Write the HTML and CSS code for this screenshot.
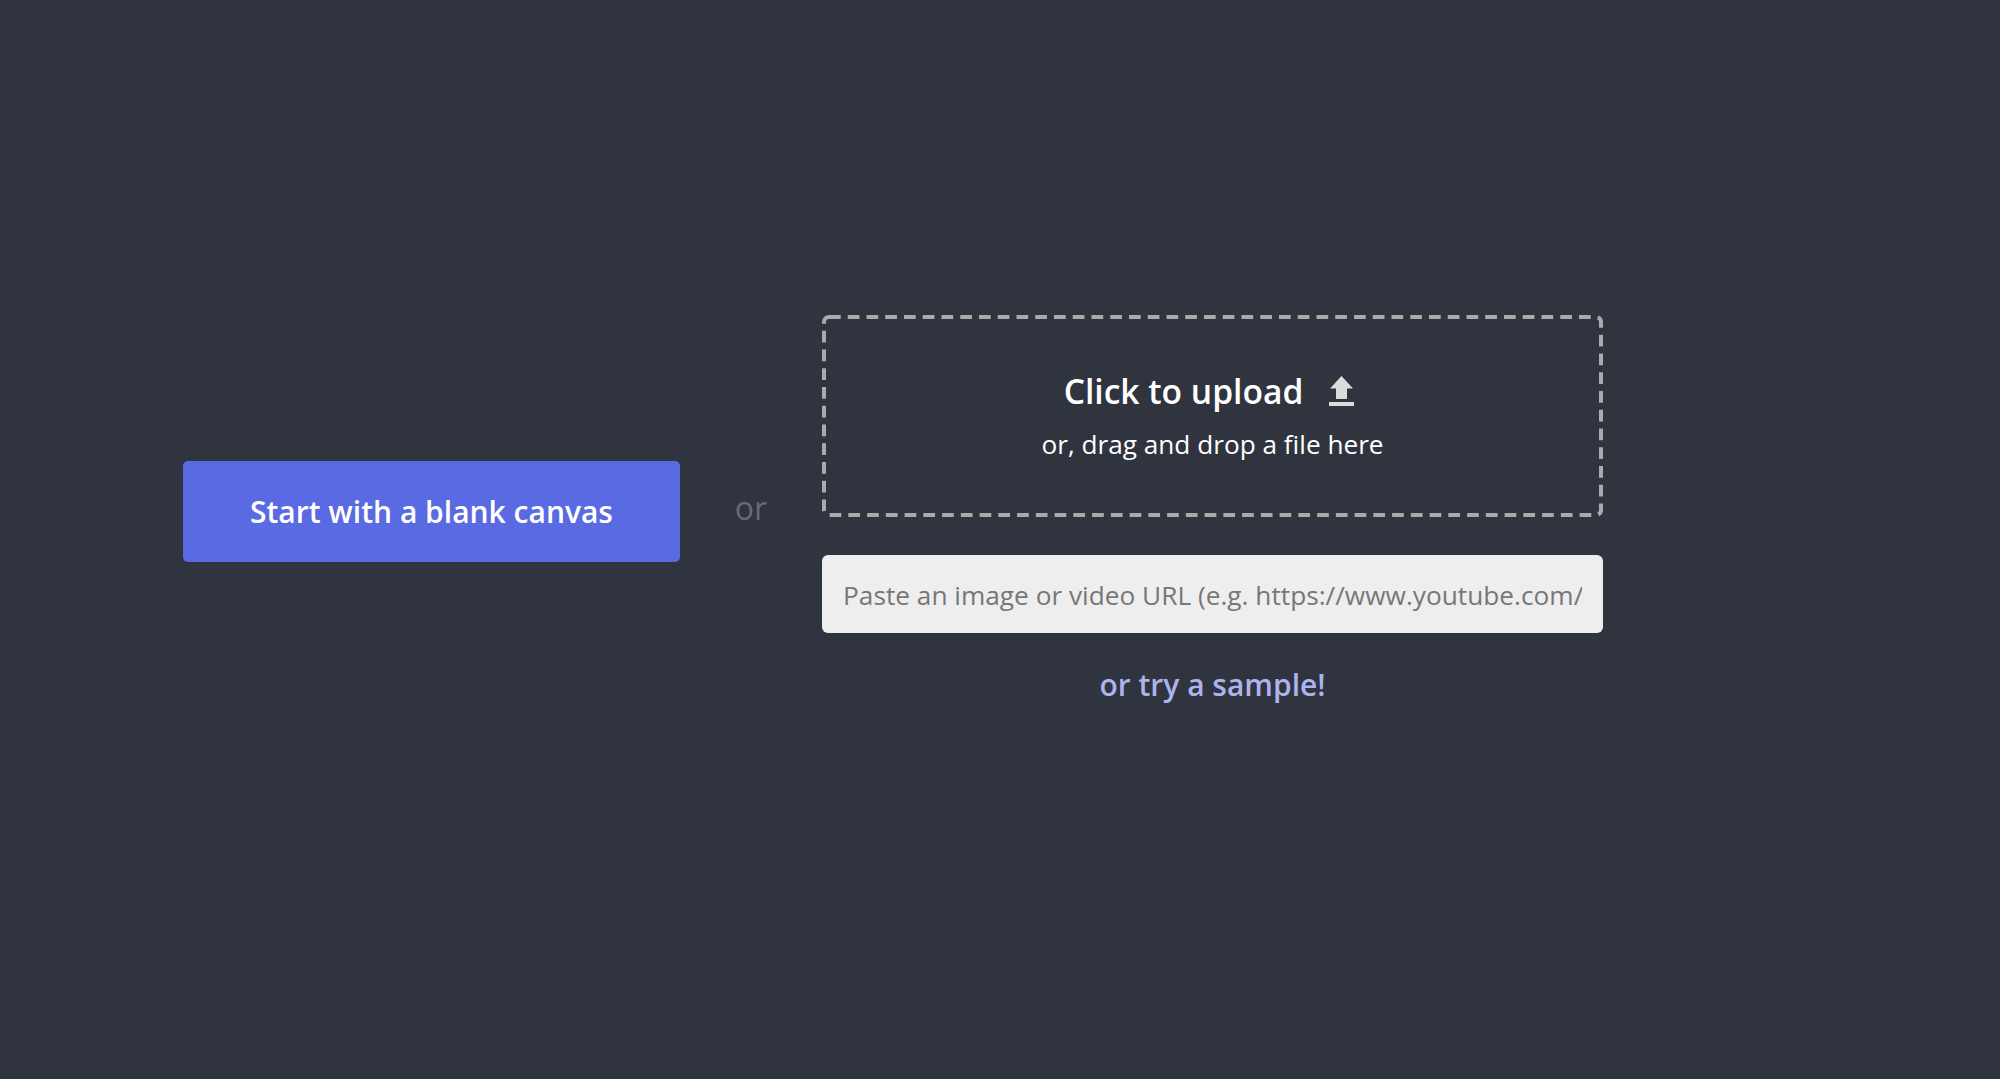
FILE: index.html
```html
<!DOCTYPE html>
<html lang="en">
<head>
    <meta charset="UTF-8">
    <title>New canvas</title>
    <link rel="stylesheet" href="styles.css">
</head>
<body>
    <main class="start-row">
        <button class="blank-btn" type="button">Start with a blank canvas</button>
        <span class="or-text">or</span>
        <div class="source-col">
            <div class="dropzone">
                <svg class="drop-border" width="781" height="202" viewBox="0 0 781 202">
                    <rect x="2" y="2" width="777" height="198" rx="5" fill="none" stroke="#aaa" stroke-width="4" stroke-dasharray="11.7 7.05"/>
                </svg>
                <div class="drop-title">
                    <span>Click to upload</span>
                    <svg class="upload-icon" width="25" height="30" viewBox="0 0 25 30">
                        <path d="M12.5 0 L24 12.5 H18 V23 H7 V12.5 H1 Z" fill="#dcdcdc"/>
                        <rect x="0" y="26" width="25" height="4" fill="#dcdcdc"/>
                    </svg>
                </div>
                <div class="drop-sub">or, drag and drop a file here</div>
            </div>
            <input class="url-input" type="text" placeholder="Paste an image or video URL (e.g. https://www.youtube.com/watch?v=abc)">
            <a class="sample-link" href="#">or try a sample!</a>
        </div>
    </main>
</body>
</html>
```

FILE: styles.css
```css
html, body {
    height: 100%;
}
body {
    margin: 0;
    background-color: #30343f;
    font-family: "Open Sans", sans-serif;
    color: #fff;
}
.start-row {
    box-sizing: border-box;
    height: 100%;
    display: flex;
    align-items: center;
    padding: 0 0 56px 183px;
}
.blank-btn {
    width: 497px;
    height: 101px;
    background-color: #5a6ae3;
    color: #fff;
    border: none;
    border-radius: 5px;
    font-family: inherit;
    font-size: 30px;
    font-weight: 600;
}
.or-text {
    width: 142px;
    text-align: center;
    font-size: 32px;
    color: #666a75;
    position: relative;
    top: -4px;
}
.source-col {
    width: 781px;
    padding-bottom: 3px;
    display: flex;
    flex-direction: column;
    align-items: center;
}
.dropzone {
    position: relative;
    box-sizing: border-box;
    width: 100%;
    height: 202px;
    display: flex;
    flex-direction: column;
    align-items: center;
    justify-content: center;
}
.drop-border {
    position: absolute;
    top: 0;
    left: 0;
}
.drop-title {
    display: flex;
    align-items: center;
    gap: 26px;
    padding-right: 7px;
    font-size: 33.6px;
    font-weight: 600;
    margin-bottom: 12px;
}
.drop-sub {
    font-size: 26.2px;
    margin-bottom: 3px;
}
.url-input {
    box-sizing: border-box;
    width: 100%;
    height: 78px;
    margin-top: 37.5px;
    padding: 2px 21px 0;
    background-color: #eee;
    border: none;
    border-radius: 6px;
    font-family: inherit;
    font-size: 26.25px;
}
.url-input::placeholder {
    color: #777;
}
.sample-link {
    margin-top: 31.5px;
    font-size: 30px;
    font-weight: 600;
    color: #adb3ec;
    text-decoration: none;
}
```
